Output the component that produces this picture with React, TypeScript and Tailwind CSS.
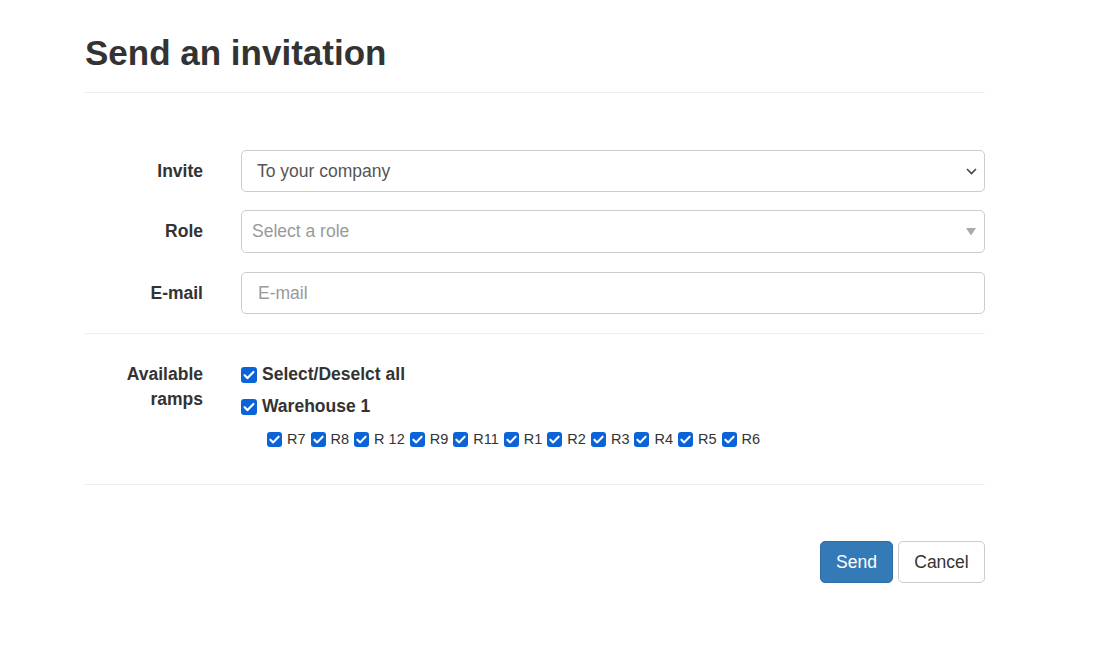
import React from "react";

function Check({ size }: { size: number }) {
  return (
    <span
      className="inline-flex shrink-0 items-center justify-center rounded-[3px] bg-[#0b63d8]"
      style={{ width: size, height: size }}
    >
      <svg viewBox="0 0 16 16" width={size} height={size}>
        <path d="M3.6 8.2 L6.6 11.1 L12.4 5" fill="none" stroke="#fff" strokeWidth="2.2" strokeLinecap="round" strokeLinejoin="round" />
      </svg>
    </span>
  );
}

const ramps = ["R7", "R8", "R 12", "R9", "R11", "R1", "R2", "R3", "R4", "R5", "R6"];

export default function App() {
  return (
    <div className="min-h-[669px] bg-white font-['Liberation_Sans',Arial,sans-serif] text-[#333]">
      <div className="ml-[85px] w-[900px]">
        <div className="border-b border-[#eee] pb-[20px] pt-[34px]">
          <h1 className="text-[35px] font-bold leading-[38px] text-[#333]">Send an invitation</h1>
        </div>

        <div className="mt-[57px] flex h-[42px] items-center">
          <label className="w-[118px] text-right text-[17.5px] font-bold">Invite</label>
          <div className="ml-[38px] flex h-full flex-1 items-center justify-between rounded-[5px] border border-[#ccc] pl-[15px] pr-[7px] text-[17.5px] text-[#555]">
            <span>To your company</span>
            <svg width="11" height="7" viewBox="0 0 11 7">
              <polyline points="1,1 5.5,5.5 10,1" fill="none" stroke="#444" strokeWidth="1.6" />
            </svg>
          </div>
        </div>

        <div className="mt-[18px] flex h-[43px] items-center">
          <label className="w-[118px] text-right text-[17.5px] font-bold">Role</label>
          <div className="ml-[38px] flex h-full flex-1 items-center justify-between rounded-[5px] border border-[#ccc] pl-[10px] pr-[8px] text-[17.5px] text-[#999]">
            <span>Select a role</span>
            <svg width="10" height="8" viewBox="0 0 10 8">
              <polygon points="0,0 10,0 5,7.5" fill="#aaa" />
            </svg>
          </div>
        </div>

        <div className="mt-[19px] flex h-[42px] items-center">
          <label className="w-[118px] text-right text-[17.5px] font-bold">E-mail</label>
          <div className="ml-[38px] flex h-full flex-1 items-center rounded-[5px] border border-[#ccc] pl-[16px] text-[17.5px] text-[#999]">
            <span>E-mail</span>
          </div>
        </div>

        <div className="mt-[19px] border-t border-[#eee]" />

        <div className="mt-[28px] flex">
          <div className="w-[118px] text-right text-[17.5px] font-bold leading-[25px]">
            Available
            <br />
            ramps
          </div>
          <div className="ml-[38px] flex-1">
            <div className="flex h-[25px] items-center">
              <Check size={16} />
              <span className="ml-[5px] text-[17.5px] font-bold">Select/Deselct all</span>
            </div>
            <div className="mt-[7px] flex h-[25px] items-center">
              <Check size={16} />
              <span className="ml-[5px] text-[17.5px] font-bold">Warehouse 1</span>
            </div>
            <div className="ml-[26px] mt-[12px] flex h-[16px] items-center gap-[5px]">
              {ramps.map((r) => (
                <div key={r} className="flex items-center">
                  <Check size={15} />
                  <span className="ml-[5px] text-[14.5px] leading-[16px] text-[#333]">{r}</span>
                </div>
              ))}
            </div>
          </div>
        </div>

        <div className="mt-[37px] border-t border-[#eee]" />

        <div className="mt-[56px] flex justify-end gap-[5px]">
          <button className="h-[42px] w-[73px] rounded-[5px] border border-[#2e6da4] bg-[#337ab7] text-[17.5px] text-white">
            Send
          </button>
          <button className="h-[42px] w-[87px] rounded-[5px] border border-[#ccc] bg-white text-[17.5px] text-[#333]">
            Cancel
          </button>
        </div>
      </div>
    </div>
  );
}
